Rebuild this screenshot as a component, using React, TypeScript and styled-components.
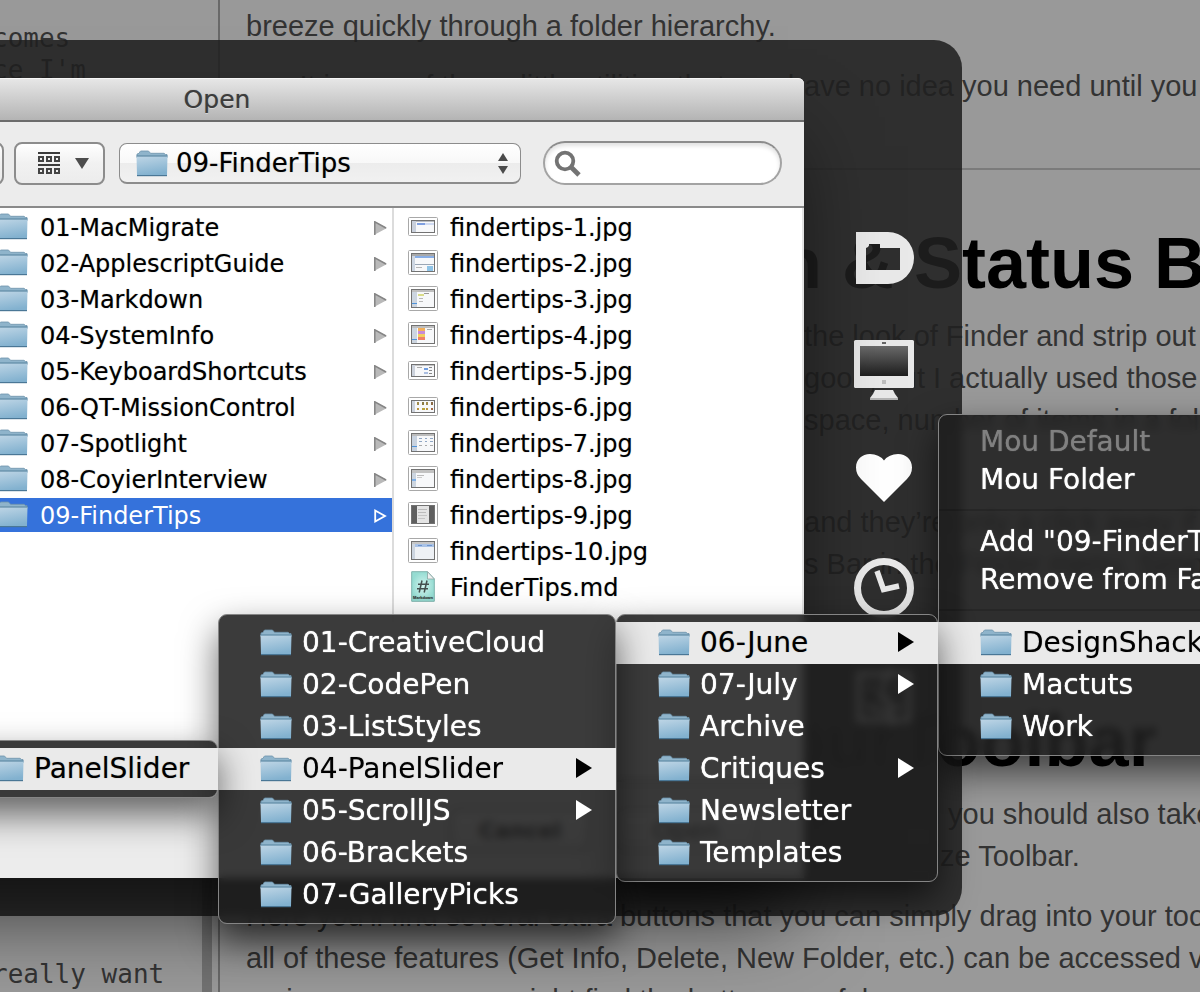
import React from "react";
import styled, { createGlobalStyle, css } from "styled-components";

const UI_FONT = '"DejaVu Sans", "Noto Sans", sans-serif';
const PROSE_FONT = '"Liberation Sans", Arial, sans-serif';
const MONO_FONT = '"DejaVu Sans Mono", monospace';

const GlobalStyle = createGlobalStyle`
  *, *::before, *::after { box-sizing: border-box; }
  html, body { margin: 0; height: 100%; overflow: hidden; }
  body { background: #999; }
  ul, h1, h2, p { margin: 0; padding: 0; font-weight: inherit; }
  ul { list-style: none; }
  button, input, select { font: inherit; color: inherit; margin: 0; }
`;

/* ---------- Desktop and document behind ---------- */

const Desktop = styled.div`
  position: relative;
  display: flex;
  width: 100%;
  height: 100vh;
  overflow: hidden;
  background: #999;
  font-family: ${UI_FONT};
`;

const Editor = styled.section`
  position: relative;
  flex: 0 0 220px;
  display: flex;
  flex-direction: column;
  justify-content: space-between;
  padding: 22px 0 2px;
  border-right: 2px solid #696969;
  font-family: ${MONO_FONT};
  font-size: 26px;
  line-height: 32px;
  color: #333;
  white-space: pre;
`;

const EditorText = styled.p`
  margin-left: -8px;
`;

const ScrollThumb = styled.div`
  position: absolute;
  right: 6px;
  top: 50%;
  bottom: -20px;
  width: 10px;
  background: rgba(0, 0, 0, 0.25);
`;

const Preview = styled.article`
  flex: 1;
  min-width: 0;
  padding-top: 5px;
  overflow: hidden;
  font-family: ${PROSE_FONT};
  color: #333;
  white-space: nowrap;
`;

const Paragraph = styled.p`
  padding-left: 26px;
  margin-bottom: 18px;
  font-size: 29px;
  line-height: 42px;
`;

const Rule = styled.hr`
  height: 2px;
  margin: 61px 0 51px;
  border: 0;
  background: #7b7b7b;
`;

const Heading = styled.h2`
  padding-left: 26px;
  margin-bottom: 10px;
  font-size: 72px;
  line-height: 84px;
  font-weight: 700;
  color: #000;
`;

const Line = styled.span`
  display: flex;
  height: 42px;
  white-space: pre;
`;

const HeadingLine = styled(Line)`
  height: 84px;
`;

const Lead = styled.span<{ $width?: number }>`
  flex: 0 0 ${(p) => p.$width ?? 558}px;
  text-align: right;
  overflow: hidden;
`;

/* ---------- Dark companion panel ---------- */

const Panel = styled.aside`
  position: absolute;
  left: -400px;
  top: 40px;
  width: 1362px;
  height: 876px;
  border-radius: 28px;
  background: rgba(32, 32, 32, 0.876);
  display: flex;
  justify-content: flex-end;
`;

const Dock = styled.nav`
  width: 156px;
  padding-top: 163px;
  display: flex;
  flex-direction: column;
  align-items: center;
`;

const DockButton = styled.button`
  width: 60px;
  height: 110px;
  padding: 0;
  border: 0;
  background: none;
  display: flex;
  align-items: center;
  svg { display: block; overflow: visible; }
`;

/* ---------- Open dialog ---------- */

const Dialog = styled.div`
  position: absolute;
  left: -370px;
  top: 78px;
  width: 1174px;
  height: 800px;
  display: flex;
  flex-direction: column;
  border-radius: 6px 6px 0 0;
  background: #ececec;
  box-shadow: 0 52px 80px -16px rgba(0, 0, 0, 0.65);
`;

const TitleBar = styled.header`
  height: 44px;
  border-radius: 6px 6px 0 0;
  border-top: 1px solid #f6f6f6;
  border-bottom: 2px solid #6c6c6c;
  background: linear-gradient(#e6e6e6, #b4b4b4);
  text-align: center;
  line-height: 42px;
  font-size: 25px;
  color: #3c3c3c;
  text-shadow: 0 0 1px rgba(60, 60, 60, 0.6), 0 1px 0 rgba(255, 255, 255, 0.5);
`;

const Toolbar = styled.div`
  height: 86px;
  padding: 0 22px 2px 0;
  border-bottom: 2px solid #8a8a8a;
  display: flex;
  align-items: center;
  justify-content: flex-end;
  gap: 14px;
`;

const ToolButton = styled.button`
  width: 91px;
  height: 43px;
  padding: 0 0 0 8px;
  border: 2px solid #8c8c8c;
  border-radius: 8px;
  background: linear-gradient(#fff, #f1f1f1 50%, #ececec);
  display: flex;
  align-items: center;
  justify-content: center;
  gap: 14px;
`;

const NavButton = styled(ToolButton)`
  margin-right: -4px;
`;

const PopupLabel = styled.label`
  position: relative;
  display: block;
  width: 402px;
  margin-right: 8px;
`;

const PopupSelect = styled.select`
  display: block;
  width: 100%;
  height: 41px;
  padding: 0 48px 0 56px;
  border: 1px solid #8c8c8c;
  border-bottom-width: 2px;
  border-radius: 8px;
  background: linear-gradient(#fff, #f8f8f8 50%, #ececec 50%, #f1f1f1);
  appearance: none;
  font-family: ${UI_FONT};
  font-size: 26px;
  color: #000;
  text-shadow: 0 0 1px rgba(0, 0, 0, 0.4);
`;

const PopupFolder = styled.span`
  position: absolute;
  left: 17px;
  top: 7px;
  pointer-events: none;
`;

const PopupArrows = styled.span`
  position: absolute;
  right: 12px;
  top: 9px;
  pointer-events: none;
`;

const SearchLabel = styled.label`
  position: relative;
  display: block;
  width: 239px;
`;

const SearchInput = styled.input`
  display: block;
  width: 100%;
  height: 44px;
  padding: 0 20px 0 46px;
  border: 2px solid #a3a3a3;
  border-top-color: #8c8c8c;
  border-radius: 22px;
  background: #fff;
  box-shadow: inset 0 3px 4px rgba(0, 0, 0, 0.12);
  font-size: 25px;
`;

const SearchGlyph = styled.span`
  position: absolute;
  left: 11px;
  top: 9px;
  pointer-events: none;
`;

const Browser = styled.div`
  flex: 1;
  min-height: 0;
  display: flex;
  justify-content: flex-end;
  background: #fff;
  border-right: 2px solid #e2e2e2;
`;

const Column = styled.ul<{ $width: number }>`
  flex: 0 0 ${(p) => p.$width}px;
  padding-top: 2px;
  display: flex;
  flex-direction: column;
  gap: 2px;
  & + & { border-left: 2px solid #dcdcdc; }
`;

const FileRow = styled.button<{ $selected?: boolean; $indent: number }>`
  width: 100%;
  height: 34px;
  border: 0;
  padding: 2px 5px 0 ${(p) => p.$indent}px;
  display: flex;
  align-items: center;
  gap: 12px;
  background: ${(p) => (p.$selected ? "#3572db" : "transparent")};
  color: ${(p) => (p.$selected ? "#fff" : "#000")};
  font-size: 24px;
  line-height: 32px;
  text-shadow: 0 0 1px ${(p) => (p.$selected ? "transparent" : "rgba(0, 0, 0, 0.4)")};
  white-space: nowrap;
  svg { flex: none; }
`;

const IconCell = styled.span`
  flex: 0 0 30px;
  display: flex;
  justify-content: center;
  padding-bottom: 3px;
`;

const FolderCell = styled.span`
  display: flex;
  padding-bottom: 4px;
`;

const Name = styled.span`
  flex: 1;
  text-align: left;
`;

const Footer = styled.footer`
  height: 98px;
  border-top: 2px solid #8a8a8a;
  padding: 0 48px 0 0;
  display: flex;
  align-items: center;
  justify-content: flex-end;
  gap: 26px;
`;

const FooterButton = styled.button`
  width: 140px;
  height: 42px;
  border: 2px solid #8c8c8c;
  border-radius: 8px;
  background: linear-gradient(#fff, #ececec);
  font-size: 22px;
  font-weight: 700;
  color: #000;
  &:disabled { color: #333; border-color: #bcbcbc; font-size: 25px; font-weight: 400; }
`;

/* ---------- Cascading menus ---------- */

const Menu = styled.ul<{ $left: number; $top: number; $width: number }>`
  position: absolute;
  left: ${(p) => p.$left}px;
  top: ${(p) => p.$top}px;
  width: ${(p) => p.$width}px;
  padding: 7px 0;
  border: 1px solid #858585;
  border-radius: 9px;
  background: rgba(31, 31, 31, 0.875);
  backdrop-filter: blur(4px);
  box-shadow: 0 16px 36px rgba(0, 0, 0, 0.6);
`;

const highlighted = css`
  background: #eaeaea;
  color: #000;
  text-shadow: 0 0 1px rgba(0, 0, 0, 0.4);
`;

const MenuItem = styled.button<{ $active?: boolean; $plain?: boolean }>`
  width: calc(100% + 2px);
  height: ${(p) => (p.$plain ? 38 : 42)}px;
  margin: 0 -1px;
  padding: ${(p) => (p.$plain ? "1px 24px 0 42px" : "0 24px 2px 42px")};
  border: 0;
  display: flex;
  align-items: center;
  gap: 10px;
  background: none;
  color: #fff;
  font-size: 28px;
  text-shadow: 0 0 1px currentColor;
  white-space: nowrap;
  ${(p) => p.$active && highlighted}
  &:disabled { color: #808080; }
  svg { flex: none; }
`;

const Separator = styled.li`
  height: 24px;
  padding: 11px 0;
  &::before {
    content: "";
    display: block;
    height: 2px;
    background: rgba(0, 0, 0, 0.15);
  }
`;

/* ---------- Drawings ---------- */

const Folder = () => (
  <svg width="32" height="27" viewBox="0 0 32 27" aria-hidden="true">
    <defs>
      <linearGradient id="folderFront" x1="0" y1="0" x2="0.25" y2="1">
        <stop offset="0" stopColor="#bfd6e6" />
        <stop offset="1" stopColor="#82b1cf" />
      </linearGradient>
    </defs>
    <path d="M1 8V4l2-.6L4 1.600Q4.400 1 5 1h7q.8 0 1.200.7L14.500 3.300h13.500l1.500 1.200H31V8z" fill="#8fb4cb" stroke="#6d93ab" strokeWidth=".8" />
    <path d="M.5 6h31l-.5 19.300q0 .7-.7.7H1.700q-.7 0-.7-.7z" fill="url(#folderFront)" />
    <path d="M.5 6h31" stroke="#5f8aa5" strokeWidth="1.200" />
    <path d="M1 25.600h30" stroke="#4a7796" strokeWidth="1.200" />
  </svg>
);

const MenuArrow = () => (
  <svg width="16" height="20" viewBox="0 0 16 20" aria-hidden="true">
    <path d="M0 0l16 10L0 20z" fill="currentColor" />
  </svg>
);

const ColumnArrow = ({ selected }: { selected?: boolean }) => (
  <svg width="13" height="14" viewBox="0 0 13 14" aria-hidden="true">
    {selected ? (
      <path d="M1.200 1.500L11 7l-9.800 5.500z" fill="none" stroke="#fff" strokeWidth="1.800" />
    ) : (
      <>
        <path d="M0 0l13 7-13 7z" fill="#b9b9b9" />
        <path d="M.8 14V.8L12 7" fill="none" stroke="#858585" strokeWidth="1.500" />
      </>
    )}
  </svg>
);

type Block = [number, number, number, number, string];

const thumbs: { tall: boolean; dark?: boolean; blocks: Block[] }[] = [
  { tall: false, blocks: [[3, 3, 5, 12, "#c9d0dc"], [8, 3, 19, 2, "#b9bcc2"], [9, 6, 8, 2, "#7f9fe0"], [17, 6, 9, 2, "#cfdaf2"]] },
  { tall: true, blocks: [[3, 3, 24, 3, "#a9a9a9"], [3, 6, 4, 15, "#cdd6e2"], [7, 6, 20, 2, "#88aee6"], [7, 14, 20, 1, "#9aa6b5"], [19, 16, 6, 5, "#8fc3e6"], [8, 17, 6, 1, "#b5b5b5"]] },
  { tall: true, blocks: [[3, 3, 24, 3, "#bfbfbf"], [3, 6, 6, 15, "#ccd5e0"], [10, 8, 6, 2, "#d9dc8a"], [3, 17, 6, 1, "#4e92d9"], [11, 12, 4, 1, "#b8b8b8"], [11, 15, 4, 1, "#b8b8b8"], [16, 7, 5, 1, "#999"]] },
  { tall: true, blocks: [[3, 3, 24, 3, "#bfbfbf"], [3, 6, 6, 15, "#ccd5e0"], [10, 6, 7, 3, "#f3b05b"], [10, 9, 7, 3, "#c78bd6"], [10, 12, 7, 3, "#f2cf5e"], [10, 15, 7, 3, "#f08068"], [3, 17, 6, 1, "#4e92d9"], [19, 7, 5, 1, "#aaa"]] },
  { tall: false, blocks: [[3, 3, 4, 12, "#ccd2dc"], [7, 3, 20, 2, "#c5c5c5"], [16, 7, 4, 2, "#6f9ce0"], [16, 11, 4, 2, "#a9bde0"], [21, 6, 3, 1, "#888"], [21, 9, 3, 1, "#888"], [21, 12, 3, 1, "#888"], [9, 6, 5, 1, "#aaa"]] },
  { tall: false, blocks: [[3, 3, 4, 12, "#ccd2dc"], [9, 5, 2, 3, "#a08a4c"], [14, 5, 2, 3, "#8a7a44"], [18, 5, 2, 3, "#a08a4c"], [23, 5, 2, 3, "#8a6a44"], [9, 11, 2, 2, "#b8933c"], [14, 11, 3, 2, "#b8a23c"], [18, 11, 2, 2, "#b8933c"], [23, 11, 2, 2, "#a36a44"]] },
  { tall: true, blocks: [[3, 3, 24, 3, "#bcbcbc"], [3, 6, 6, 15, "#c8d2df"], [3, 16, 6, 1, "#4e92d9"], [11, 8, 3, 1, "#8fa6c4"], [17, 8, 2, 1, "#8fa6c4"], [22, 8, 3, 1, "#8fa6c4"], [11, 11, 3, 1, "#8fa6c4"], [17, 11, 2, 1, "#8fa6c4"], [22, 11, 3, 1, "#8fa6c4"], [11, 15, 3, 1, "#aaa"], [17, 15, 2, 1, "#aaa"], [22, 15, 3, 1, "#aaa"]] },
  { tall: true, blocks: [[3, 3, 24, 4, "#c2c2c2"], [3, 7, 5, 14, "#ccd5e0"], [3, 13, 5, 2, "#7fb0e6"], [9, 9, 7, 1, "#bbb"], [9, 11, 5, 1, "#ccc"]] },
  { tall: true, dark: true, blocks: [[9, 4, 12, 17, "#e4e4e4"], [10, 7, 9, 1, "#bbb"], [10, 10, 8, 1, "#bbb"], [10, 13, 9, 1, "#c4c4c4"], [10, 16, 7, 1, "#c4c4c4"]] },
  { tall: true, blocks: [[3, 3, 24, 3, "#c6c6c6"], [3, 6, 4, 15, "#ccd5e0"], [7, 6, 20, 3, "#a9c2e6"], [7, 9, 20, 12, "#eef1f5"], [10, 7, 4, 1, "#6f95cc"], [19, 7, 5, 1, "#6f95cc"]] },
];

const Thumb = ({ index }: { index: number }) => {
  const { tall, dark, blocks } = thumbs[index];
  const h = tall ? 25 : 19;
  return (
    <svg width="30" height={h} viewBox={`0 0 30 ${h}`} aria-hidden="true">
      <rect x=".5" y=".5" width="29" height={h - 1} rx="1" fill="#fff" stroke="#a8a8a8" />
      <rect x="3" y="3" width="24" height={h - 6} fill={dark ? "#5f5f5f" : "#f7f8fa"} />
      {blocks.map(([x, y, w, bh, c], i) => (
        <rect key={i} x={x} y={y} width={w} height={bh} fill={c} />
      ))}
      <rect x="3.500" y="3.500" width="23" height={h - 7} fill="none" stroke="#727272" />
    </svg>
  );
};

const MarkdownIcon = () => (
  <svg width="24" height="31" viewBox="0 0 24 31" aria-hidden="true">
    <defs>
      <radialGradient id="sheet">
        <stop offset="0" stopColor="#d2f4ef" />
        <stop offset="1" stopColor="#95dcd2" />
      </radialGradient>
    </defs>
    <path d="M.7.700h15.800l6.800 7.300v22.300H.7z" fill="url(#sheet)" stroke="#7fb3ad" strokeWidth="1" />
    <path d="M16.500.7l6.800 7.300h-6.800z" fill="#f0f0f0" stroke="#8aa5a2" strokeWidth=".8" />
    <path d="M11 9.500L8.200 21.500M16 9.500l-2.800 12M7 13.200h11M6 17.700h11" stroke="#45504f" strokeWidth="1.500" fill="none" />
    <text x="12" y="28" fontSize="4" fontWeight="700" textAnchor="middle" fill="#333" fontFamily="Liberation Sans, sans-serif">Markdown</text>
  </svg>
);

const ArrangeGlyph = () => (
  <svg width="23" height="23" viewBox="0 0 23 23" aria-hidden="true">
    <path d="M0 1h22M0 13h22" stroke="#3c3c3c" strokeWidth="2" />
    {[4, 16].map((y) =>
      [0, 8, 16].map((x) => (
        <rect key={`${x}-${y}`} x={x + 1} y={y + 1} width="4" height="4" fill="none" stroke="#444" strokeWidth="2" />
      ))
    )}
  </svg>
);

const DownGlyph = () => (
  <svg width="14" height="11" viewBox="0 0 14 11" aria-hidden="true">
    <path d="M0 0h14L7 11z" fill="#4c4c4c" />
  </svg>
);

const StepperGlyph = () => (
  <svg width="12" height="23" viewBox="0 0 12 23" aria-hidden="true">
    <path d="M6 1l5 8H1zM6 22l5-8H1z" fill="#4a4a4a" />
  </svg>
);

const Magnifier = () => (
  <svg width="28" height="27" viewBox="0 0 28 27" aria-hidden="true">
    <circle cx="11" cy="11" r="8.300" fill="none" stroke="#737373" strokeWidth="3.800" />
    <path d="M17 17l8 8" stroke="#737373" strokeWidth="4.800" />
  </svg>
);

const DefaultFolderLogo = () => (
  <svg width="60" height="60" viewBox="0 0 60 60" aria-hidden="true">
    <path fillRule="evenodd" fill="#e9e9e9" d="M2 4h32a26 26 0 0 1 0 52H2zM12 20v22h34V20H26v-4H15v1.500q-.5 1.500-3 2.500z" />
  </svg>
);

const ComputerIcon = () => (
  <svg width="60" height="60" viewBox="0 0 60 60" aria-hidden="true">
    <defs>
      <linearGradient id="screen" x1="0" y1="0" x2="0" y2="1">
        <stop offset="0" stopColor="#6a6a6a" />
        <stop offset="1" stopColor="#1e1e1e" />
      </linearGradient>
    </defs>
    <rect x="0" y="2" width="60" height="48" rx="1.500" fill="#e8e8e8" />
    <rect x="6" y="8" width="48" height="30" fill="url(#screen)" />
    <rect x="28" y="4" width="4" height="2" fill="#666" />
    <rect x="28" y="42" width="4" height="4" fill="#bdbdbd" />
    <path d="M21 52h18l2 4 3 4v2H16v-2l3-4z" fill="#e8e8e8" />
    <path d="M16 61h28" stroke="#b4b4b4" strokeWidth="2" />
  </svg>
);

const HeartIcon = () => (
  <svg width="60" height="60" viewBox="0 0 60 60" aria-hidden="true">
    <path d="M30 54L7 31Q2 26 2 19.500C2 11.500 8 6 16 6q9 0 14 6.500Q35 6 44 6c8 0 14 5.500 14 13.500Q58 26 53 31z" fill="#fff" />
  </svg>
);

const ClockIcon = () => (
  <svg width="60" height="60" viewBox="0 0 60 60" aria-hidden="true">
    <circle cx="30" cy="30" r="26.500" fill="none" stroke="#e9e9e9" strokeWidth="7" />
    <path d="M23 13l6.500 18.500L45 28" fill="none" stroke="#e9e9e9" strokeWidth="5.500" />
  </svg>
);

const FinderIcon = () => (
  <svg width="60" height="60" viewBox="0 0 60 60" aria-hidden="true">
    <rect x="5" y="6" width="50" height="46" fill="none" stroke="#e9e9e9" strokeWidth="5" />
    <path d="M37 0Q28 16 27 31h8q0 14 4 27M17 17v5M44 17v5M13 37q17 12 34 0" fill="none" stroke="#e9e9e9" strokeWidth="4" />
  </svg>
);

/* ---------- Data ---------- */

const folders = [
  "01-MacMigrate",
  "02-ApplescriptGuide",
  "03-Markdown",
  "04-SystemInfo",
  "05-KeyboardShortcuts",
  "06-QT-MissionControl",
  "07-Spotlight",
  "08-CoyierInterview",
  "09-FinderTips",
];

interface Entry {
  name: string;
  active?: boolean;
  arrow?: boolean;
}

const topFolders: Entry[] = [{ name: "DesignShack", active: true }, { name: "Mactuts" }, { name: "Work" }];

const months: Entry[] = [
  { name: "06-June", active: true, arrow: true },
  { name: "07-July", arrow: true },
  { name: "Archive" },
  { name: "Critiques", arrow: true },
  { name: "Newsletter" },
  { name: "Templates" },
];

const projects: Entry[] = [
  { name: "01-CreativeCloud" },
  { name: "02-CodePen" },
  { name: "03-ListStyles" },
  { name: "04-PanelSlider", active: true, arrow: true },
  { name: "05-ScrollJS", arrow: true },
  { name: "06-Brackets" },
  { name: "07-GalleryPicks" },
];

const leaf: Entry[] = [{ name: "PanelSlider", active: true }];

const FolderItems = ({ items }: { items: Entry[] }) => (
  <>
    {items.map((item) => (
      <li key={item.name}>
        <MenuItem $active={item.active}>
          <Folder />
          <Name>{item.name}</Name>
          {item.arrow && <MenuArrow />}
        </MenuItem>
      </li>
    ))}
  </>
);

export default function App() {
  return (
    <>
      <GlobalStyle />
      <Desktop>
        <Editor>
          <EditorText>{"comes\nce I'm"}</EditorText>
          <EditorText>really want</EditorText>
          <ScrollThumb />
        </Editor>

        <Preview>
          <Paragraph>breeze quickly through a folder hierarchy.</Paragraph>
          <Paragraph>
            <Line><Lead>It is one of those little utilities that you h</Lead>ave no idea you need until you try it.</Line>
          </Paragraph>
          <Rule />
          <Heading>
            <HeadingLine><Lead $width={576}>Path, Colum n</Lead> &amp; Status Bars</HeadingLine>
          </Heading>
          <Paragraph>
            <Line><Lead>Apple decided to clean up</Lead>the look of Finder and strip out some</Line>
            <Line><Lead>of its parts. It may look</Lead>good, but I actually used those bars</Line>
            <Line><Lead>for things like free</Lead>space, number of items in a folder</Line>
            <Line><Lead>and so on.</Lead></Line>
          </Paragraph>
          <Paragraph>
            <Line><Lead>They are still around </Lead>and they’re only a click away if you</Line>
            <Line><Lead>look for the Statu</Lead>s Bar in the Finder menu. Simply</Line>
          </Paragraph>
          <Rule />
          <Heading>
            <HeadingLine><Lead $width={652}>Customize Your</Lead>Toolbar</HeadingLine>
          </Heading>
          <Paragraph>
            <Line><Lead $width={702}>While you are in that menu </Lead>you should also take a</Line>
            <Line><Lead $width={694}>look at Customi</Lead>ze Toolbar.</Line>
          </Paragraph>
          <Paragraph>
            <Line>Here you’ll find several extra buttons that you can simply drag into your toolbar.</Line>
            <Line>all of these features (Get Info, Delete, New Folder, etc.) can be accessed via</Line>
            <Line>various menus, you might find the buttons useful.</Line>
          </Paragraph>
        </Preview>

        <Panel>
          <Dock>
            <DockButton aria-label="Default Folder"><DefaultFolderLogo /></DockButton>
            <DockButton aria-label="Computer"><ComputerIcon /></DockButton>
            <DockButton aria-label="Favorites"><HeartIcon /></DockButton>
            <DockButton aria-label="Recent"><ClockIcon /></DockButton>
            <DockButton aria-label="Finder windows"><FinderIcon /></DockButton>
          </Dock>
        </Panel>

        <Dialog role="dialog" aria-label="Open">
          <TitleBar>Open</TitleBar>
          <Toolbar>
            <NavButton aria-label="View as columns" />
            <ToolButton aria-label="Arrange">
              <ArrangeGlyph />
              <DownGlyph />
            </ToolButton>
            <PopupLabel>
              <PopupSelect defaultValue="09-FinderTips" aria-label="Folder">
                <option>09-FinderTips</option>
              </PopupSelect>
              <PopupFolder><Folder /></PopupFolder>
              <PopupArrows><StepperGlyph /></PopupArrows>
            </PopupLabel>
            <SearchLabel>
              <SearchInput type="text" aria-label="Search" />
              <SearchGlyph><Magnifier /></SearchGlyph>
            </SearchLabel>
          </Toolbar>
          <Browser>
            <Column $width={400}>
              {folders.map((name, i) => {
                const selected = i === folders.length - 1;
                return (
                  <li key={name}>
                    <FileRow $selected={selected} $indent={4}>
                      <FolderCell><Folder /></FolderCell>
                      <Name>{name}</Name>
                      <ColumnArrow selected={selected} />
                    </FileRow>
                  </li>
                );
              })}
            </Column>
            <Column $width={410}>
              {thumbs.map((_, i) => (
                <li key={i}>
                  <FileRow $indent={14}>
                    <IconCell><Thumb index={i} /></IconCell>
                    <Name>{`findertips-${i + 1}.jpg`}</Name>
                  </FileRow>
                </li>
              ))}
              <li>
                <FileRow $indent={14}>
                  <IconCell><MarkdownIcon /></IconCell>
                  <Name>FinderTips.md</Name>
                </FileRow>
              </li>
            </Column>
          </Browser>
          <Footer>
            <FooterButton>Cancel</FooterButton>
            <FooterButton disabled>Open</FooterButton>
          </Footer>
        </Dialog>

        <Menu $left={938} $top={414} $width={520}>
          <li><MenuItem $plain disabled>Mou Default</MenuItem></li>
          <li><MenuItem $plain>Mou Folder</MenuItem></li>
          <Separator />
          <li><MenuItem $plain>Add "09-FinderTips" to Favorites</MenuItem></li>
          <li><MenuItem $plain>Remove from Favorites</MenuItem></li>
          <Separator />
          <FolderItems items={topFolders} />
        </Menu>
        <Menu $left={616} $top={614} $width={322}>
          <FolderItems items={months} />
        </Menu>
        <Menu $left={218} $top={614} $width={398}>
          <FolderItems items={projects} />
        </Menu>
        <Menu $left={-50} $top={740} $width={268}>
          <FolderItems items={leaf} />
        </Menu>
      </Desktop>
    </>
  );
}
